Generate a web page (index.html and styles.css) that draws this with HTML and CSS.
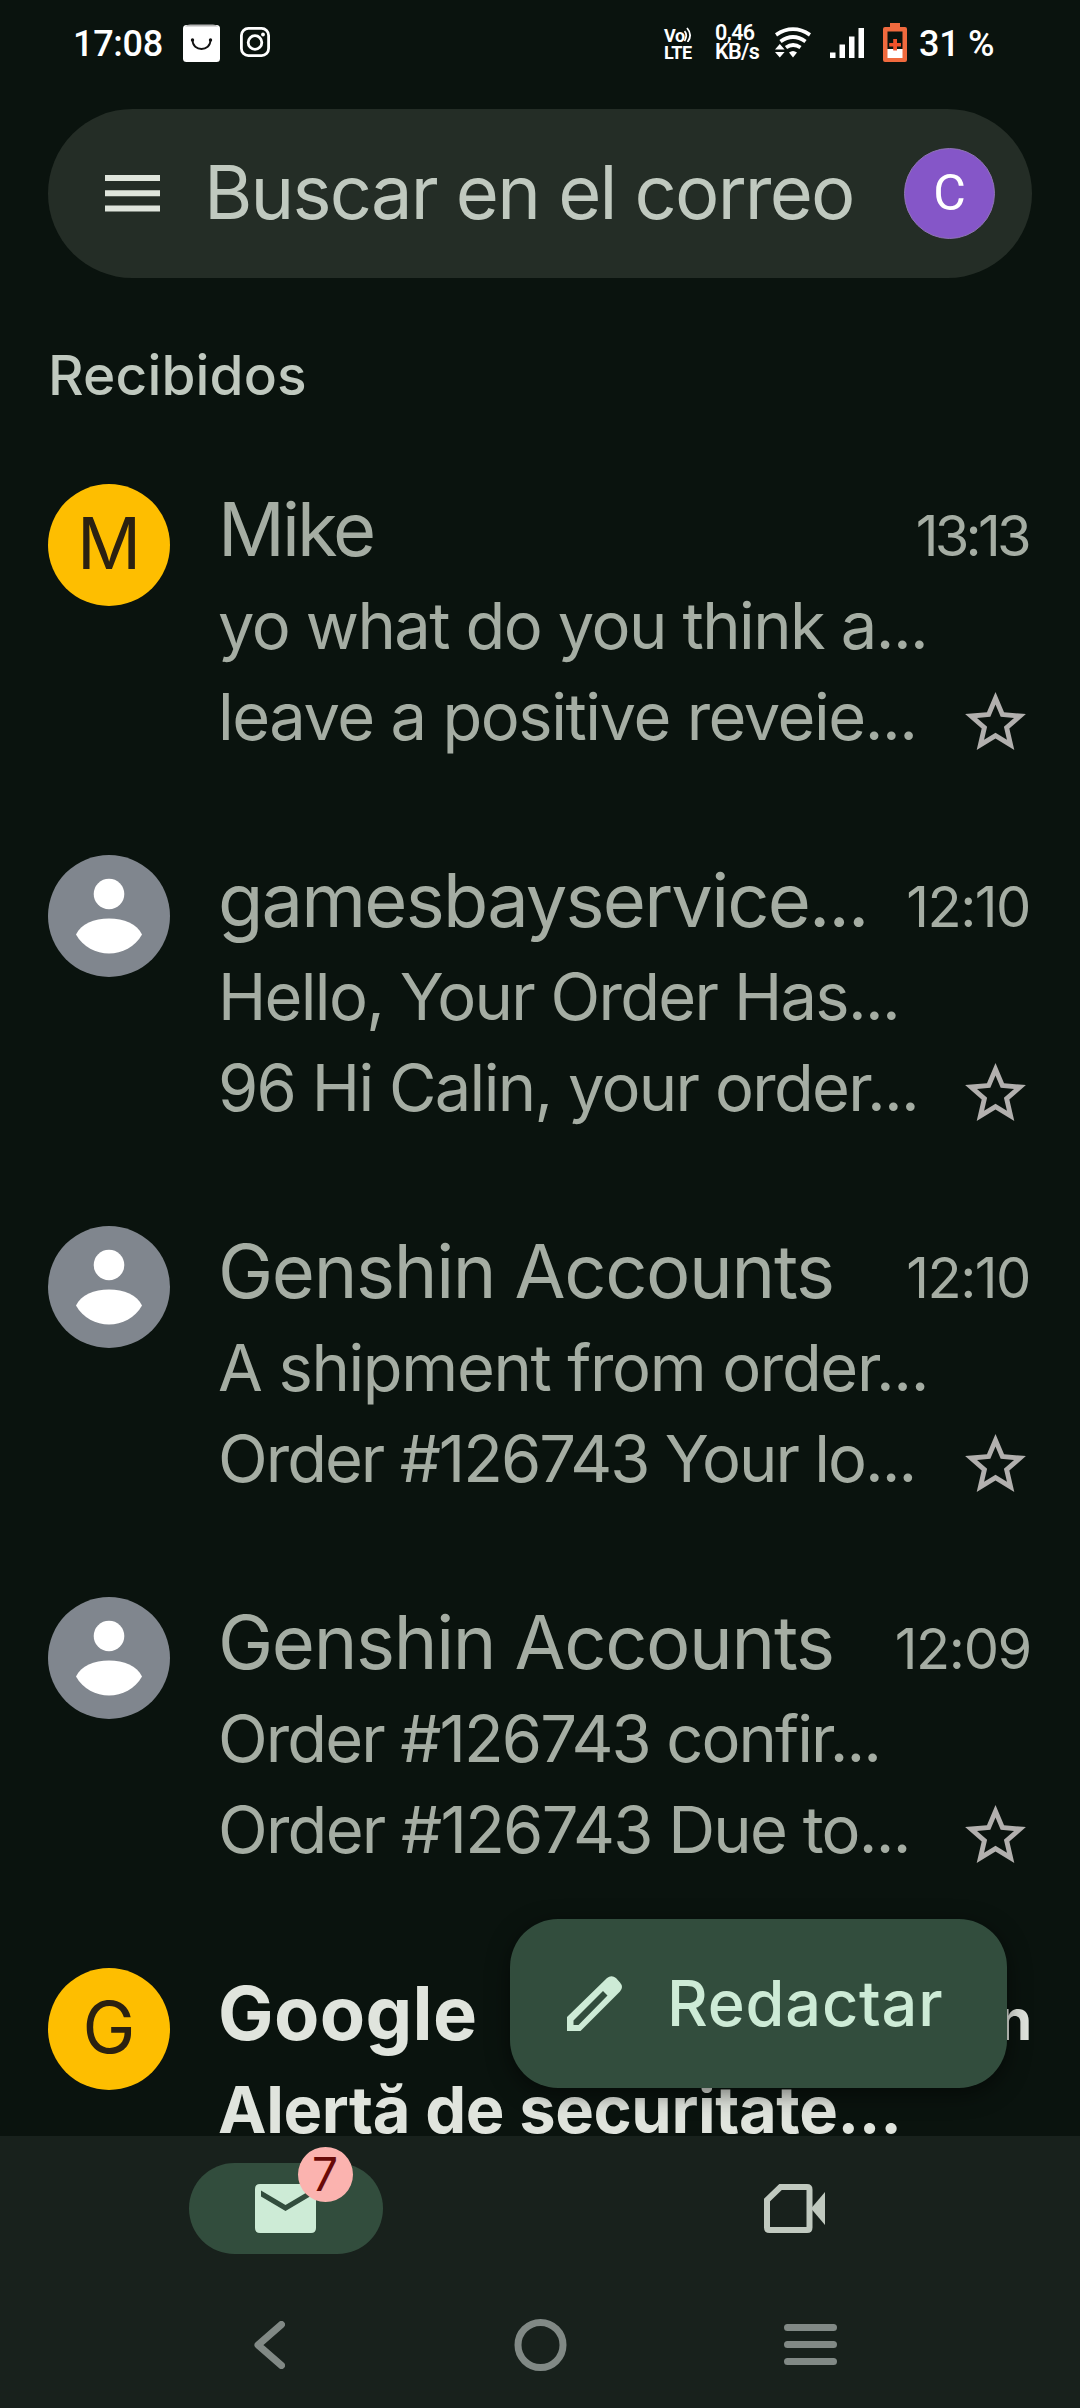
FILE: index.html
```html
<!DOCTYPE html>
<html lang="es">
<head>
<meta charset="utf-8">
<title>Recibidos</title>
<link rel="stylesheet" href="styles.css">
</head>
<body>
<svg class="defs" width="0" height="0">
  <symbol id="star" viewBox="0 0 24 24"><path d="M22 9.24l-7.19-.62L12 2 9.19 8.63 2 9.24l5.46 4.73L5.82 21 12 17.27 18.18 21l-1.63-7.03L22 9.24zM12 15.4l-3.76 2.27 1-4.28-3.32-2.88 4.38-.38L12 6.1l1.71 4.04 4.38.38-3.32 2.88 1 4.28L12 15.4z"/></symbol>
  <symbol id="person" viewBox="0 0 122 122"><circle cx="61" cy="39" r="15.3"/><path d="M28 79.500C33 69 46 63.500 61 63.500S89 69 94 79.500C87 92 74 98.500 61 98.500S35 92 28 79.500z"/></symbol>
</svg>

<header class="status">
  <span class="clock">17:08</span>
  <svg class="bag" viewBox="0 0 37 38"><rect y="1" width="37" height="37" rx="3.500" fill="#fff"/><path d="M2 2.500Q4 .5 7 .5H30Q33 .5 35 2.500z" fill="#b5b5b5"/><path d="M9.500 16C9.500 28 27.500 28 27.500 16" fill="none" stroke="#111" stroke-width="1.800"/><circle cx="9.500" cy="16" r="1.700" fill="#111"/><circle cx="27.500" cy="16" r="1.700" fill="#111"/></svg>
  <svg class="insta" viewBox="0 0 30 30" fill="none" stroke="#fff" stroke-width="2.800"><rect x="1.400" y="1.400" width="27.200" height="27.200" rx="7"/><circle cx="15" cy="15.500" r="6.800"/><circle cx="23" cy="7.500" r="1.900" fill="#fff" stroke="none"/></svg>
  <span class="spring"></span>
  <span class="volte"><span class="vo">Vo<svg viewBox="0 0 8 15" fill="none" stroke="#fff" stroke-width="1.800"><path d="M.5 4Q4 8 .5 14M3 1Q9 8 3.500 15"/></svg></span><span>LTE</span></span>
  <span class="rate"><span>0,46</span><span>KB/s</span></span>
  <svg class="wifi" viewBox="0 0 36 31"><g fill="none" stroke="#fff" stroke-width="3.800"><path d="M1 7.800Q18 -3.500 35 7.800"/><path d="M5.500 14.500Q18 5.500 30.500 14.500"/><path d="M11 20.500Q18 15.500 25.500 20.500"/></g><path d="M0 22.500L4.800 17L9.600 22.500zM0 25H9.600L4.800 30.500zM14 25.500Q18 22.500 22 25.500L18 30.500z" fill="#fff"/></svg>
  <svg class="signal" viewBox="0 0 34 30" fill="#fff"><path d="M0 24.500h5.500V30H0zM9.500 16.500H15V30H9.500zM19 8.500h5.500V30H19zM28.500 0H34v30h-5.500z"/></svg>
  <svg class="battery" viewBox="0 0 24 39"><path d="M7 0h10v4h5q2 0 2 2v31q0 2-2 2H2q-2 0-2-2V6q0-2 2-2h5z" fill="#f06a3e"/><path d="M4.500 8.500h15V26h-15z" fill="#0a130e"/><path d="M4.500 26h15v9h-15z" fill="#fff"/><path d="M10.200 16h3.800v4h4v3.500h-4v4h-3.800v-4h-4V20h4z" fill="#f0522b"/></svg>
  <span class="level">31 %</span>
</header>

<div class="search">
  <svg class="menu" viewBox="0 0 55 37"><path d="M0 0h55v6H0zM0 15.300h55v6H0zM0 30.600h55v6H0z"/></svg>
  <span class="hint">Buscar en el correo</span>
  <span class="account">C</span>
</div>

<h1 class="section">Recibidos</h1>

<main class="list">
  <article class="mail m1">
    <div class="avatar letter">M</div>
    <div class="body">
      <div class="top"><span class="name">Mike</span><span class="time">13:13</span></div>
      <div class="subject">yo what do you think a...</div>
      <div class="bottom"><span class="snippet">leave a positive reveie...</span><svg class="star"><use href="#star"/></svg></div>
    </div>
  </article>
  <article class="mail m2">
    <div class="avatar"><svg><use href="#person"/></svg></div>
    <div class="body">
      <div class="top"><span class="name">gamesbayservice...</span><span class="time">12:10</span></div>
      <div class="subject">Hello, Your Order Has...</div>
      <div class="bottom"><span class="snippet">96 Hi Calin, your order...</span><svg class="star"><use href="#star"/></svg></div>
    </div>
  </article>
  <article class="mail m3">
    <div class="avatar"><svg><use href="#person"/></svg></div>
    <div class="body">
      <div class="top"><span class="name">Genshin Accounts</span><span class="time">12:10</span></div>
      <div class="subject">A shipment from order...</div>
      <div class="bottom"><span class="snippet">Order #126743 Your lo...</span><svg class="star"><use href="#star"/></svg></div>
    </div>
  </article>
  <article class="mail m4">
    <div class="avatar"><svg><use href="#person"/></svg></div>
    <div class="body">
      <div class="top"><span class="name">Genshin Accounts</span><span class="time">12:09</span></div>
      <div class="subject">Order #126743 confir...</div>
      <div class="bottom"><span class="snippet">Order #126743 Due to...</span><svg class="star"><use href="#star"/></svg></div>
    </div>
  </article>
  <article class="mail m5 unread">
    <div class="avatar letter">G</div>
    <div class="body">
      <div class="top"><span class="name">Google</span><span class="time">n</span></div>
      <div class="subject">Alertă de securitate...</div>
    </div>
  </article>
  <button class="compose">
    <svg viewBox="0 0 56 56"><path fill-rule="evenodd" d="M0 55V41L40 2Q44.500-1.500 49 2L53 6.500Q57 11 53 15.500L13.500 55zM6.500 49H11.500L40.500 19.500L36 15L6.500 44.500z"/></svg>
    <span>Redactar</span>
  </button>
</main>

<footer class="dock">
  <nav class="tabs">
    <div class="tab active">
      <svg viewBox="0 0 61 49"><path fill-rule="evenodd" d="M5 0H56Q61 0 61 5V44Q61 49 56 49H5Q0 49 0 44V5Q0 0 5 0zM6 6.500V12.500L30.500 27L55 12.500V6.500L30.500 21z"/></svg>
      <span class="badge">7</span>
    </div>
    <div class="tab">
      <svg viewBox="0 0 61 49"><path d="M16.500 3H43Q45.500 3 45.500 5.500V43.500Q45.500 46 43 46H5.500Q3 46 3 43.500V16z" fill="none" stroke="#c0c9bf" stroke-width="6"/><path d="M47 24.500L61 8V41z" fill="#c0c9bf"/></svg>
    </div>
  </nav>
  <nav class="system">
    <svg class="back" viewBox="0 0 31 48"><path d="M27.500 3.500L4 24L27.500 44.500"/></svg>
    <svg class="home" viewBox="0 0 53 52"><circle cx="26.500" cy="26" r="22.500"/></svg>
    <svg class="recents" viewBox="0 0 53 42"><path d="M3.500 3.500H49.500M3.500 20.500H49.500M3.500 37.500H49.500"/></svg>
  </nav>
</footer>
</body>
</html>
```
FILE: styles.css
```css
* { box-sizing: border-box; }
body {
  margin: 0;
  width: 1080px;
  height: 2408px;
  overflow: hidden;
  display: flex;
  flex-direction: column;
  background: #0a130e;
  color: #a5ada3;
  font-family: Inter, "Open Sans", sans-serif;
}
.defs { position: absolute; }
svg { display: block; flex: none; }

/* status bar */
.status {
  height: 109px;
  padding: 23px 86px 0 73px;
  display: flex;
  align-items: flex-start;
  color: #fff;
  font-family: Roboto, sans-serif;
  font-weight: 500;
}
.clock, .level { font-size: 36px; line-height: 42px; }
.clock { width: 110px; letter-spacing: -.3px; }
.bag { width: 37px; height: 38px; margin-top: 1px; }
.insta { width: 30px; height: 30px; margin: 4px 0 0 20px; }
.spring { flex: 1; }
.volte, .rate { display: flex; flex-direction: column; }
.volte { width: 51px; font-size: 18px; line-height: 17px; margin-top: 4px; font-weight: 700; letter-spacing: -.4px; }
.vo { display: flex; }
.vo svg { width: 8px; height: 15px; margin-left: -1px; }
.rate { width: 60px; font-size: 21.500px; line-height: 18.500px; margin-top: 1px; font-weight: 600; letter-spacing: -.6px; }
.wifi { width: 36px; height: 31px; margin-top: 4px; }
.signal { width: 34px; height: 30px; margin: 5px 0 0 19px; }
.battery { width: 24px; height: 39px; margin: 0 12px 0 19px; }
.level { width: 75px; white-space: nowrap; letter-spacing: -.3px; }

/* search */
.search {
  height: 169px;
  margin: 0 48px;
  padding: 0 37px 0 57px;
  border-radius: 85px;
  background: #242d26;
  display: flex;
  align-items: center;
}
.menu { width: 55px; height: 37px; fill: #dfe5dc; }
.hint {
  flex: 1;
  margin-left: 44px;
  padding-bottom: 3px;
  font-size: 74px;
  line-height: 80px;
  letter-spacing: -1.800px;
  white-space: nowrap;
  color: #c0c9bf;
}
.account {
  width: 91px;
  height: 91px;
  border-radius: 50%;
  border: 1px solid #8f74b4;
  background: #8556c8;
  color: #fff;
  font: 400 50px/89px Roboto, sans-serif;
  text-align: center;
}

.section {
  margin: 0;
  height: 206px;
  padding: 62px 0 0 48px;
  font-size: 55px;
  line-height: 70px;
  font-weight: 500;
  letter-spacing: .15px;
  color: #c0c9bf;
}

/* mail list */
.list {
  position: relative;
  height: 1652px;
  padding: 0 48px;
  overflow: hidden;
}
.mail { height: 371px; display: flex; gap: 48px; }
.avatar {
  flex: none;
  width: 122px;
  height: 122px;
  border-radius: 50%;
  background: #80868e;
}
.avatar svg { width: 122px; height: 122px; fill: #fff; }
.avatar.letter {
  background: #febe00;
  color: #2b2111;
  font-size: 71px;
  line-height: 119px;
  text-align: center;
}
.body { flex: 1; min-width: 0; padding-top: 5px; white-space: nowrap; }
.top { display: flex; justify-content: space-between; align-items: baseline; height: 91px; }
.name { font-size: 74px; line-height: 80px; }
.time { font-size: 56px; line-height: 60px; }
.subject, .snippet { font-size: 65px; line-height: 91px; }
.bottom { display: flex; justify-content: space-between; }
.star { width: 73px; height: 73px; margin-top: 15px; fill: #b2b0ae; }

.m1 .name { letter-spacing: -2.900px; }
.m1 .time { letter-spacing: -3.700px; margin-right: 4px; }
.m1 .subject { letter-spacing: -1.580px; }
.m1 .snippet { letter-spacing: -1.450px; }
.m2 .name { letter-spacing: -1.810px; }
.m2 .time, .m3 .time { letter-spacing: -1.460px; margin-right: 2px; }
.m2 .subject, .m2 .snippet { letter-spacing: -1.700px; }
.m3 .name, .m4 .name { letter-spacing: -1.350px; }
.m3 .subject { letter-spacing: -1.350px; }
.m3 .snippet { letter-spacing: -1.980px; }
.m4 .time { letter-spacing: -1.350px; margin-right: 1px; }
.m4 .subject { letter-spacing: -1.880px; }
.m4 .snippet { letter-spacing: -1.740px; }
.m5 .name { letter-spacing: .38px; }
.m5 .subject { letter-spacing: -.38px; }
.unread .body { color: #e0e4dd; font-weight: 700; }

/* floating button over the list */
.compose {
  position: absolute;
  right: 73px;
  bottom: 48px;
  width: 497px;
  height: 169px;
  padding: 0 0 0 57px;
  border: 0;
  border-radius: 48px;
  background: #324d3d;
  box-shadow: 0 6px 22px rgba(0, 0, 0, .5);
  display: flex;
  align-items: center;
  gap: 44px;
  color: #cdebd6;
  font: 500 63px/80px Inter, sans-serif;
  letter-spacing: .8px;
}
.compose svg { width: 56px; height: 56px; fill: #cdebd6; }
.compose span { padding-bottom: 2px; }

/* bottom bars */
.dock { flex: 1; background: #18211c; padding-top: 27px; }
.tabs { display: flex; padding: 0 31px; }
.tab {
  position: relative;
  width: 194px;
  height: 91px;
  margin: 0 auto;
  border-radius: 46px;
  display: flex;
  align-items: center;
  justify-content: center;
}
.tab.active { background: #324d3d; }
.tab svg { width: 61px; height: 49px; fill: #cdebd6; }
.badge {
  position: absolute;
  left: 109px;
  top: -16px;
  width: 55px;
  height: 55px;
  border-radius: 50%;
  background: #fbb3af;
  color: #690a08;
  font-size: 46px;
  line-height: 54px;
  text-align: center;
}
.system {
  display: flex;
  align-items: center;
  justify-content: space-between;
  padding: 65px 243px 0 254px;
}
.system svg { fill: none; stroke: #818985; stroke-width: 7; stroke-linecap: round; stroke-linejoin: round; }
.back { width: 31px; height: 48px; }
.system .home { width: 53px; height: 52px; margin-left: 11px; }
.recents { width: 53px; height: 42px; }
```
